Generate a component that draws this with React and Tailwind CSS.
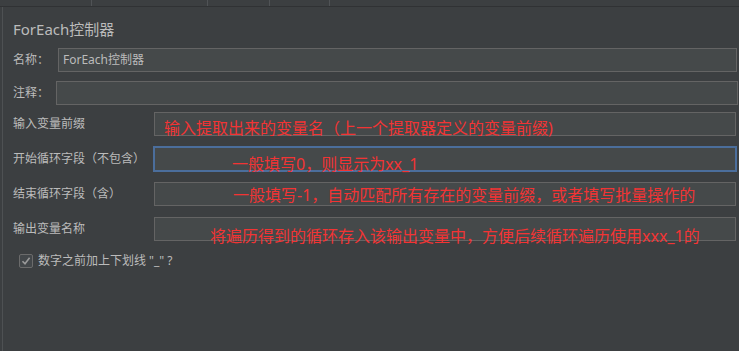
import React from "react";

const font = { fontFamily: '"Noto Sans", "Noto Sans CJK SC", sans-serif' };

function Row({ label, labelW, mt, h, focused, children, right }) {
  return (
    <div className={`flex items-center ${mt}`}>
      <div className={`${labelW} shrink-0 text-[12px] leading-none text-[#bbbbbb] whitespace-nowrap`}>{label}</div>
      <div
        className={`${h} ${right} flex-1 relative bg-[#45494a] ${
          focused ? "border-2 border-[#4b6e9c]" : "border border-[#646464]"
        }`}
      >
        {children}
      </div>
    </div>
  );
}

function Note({ className, children }) {
  return (
    <div className={`text-[16px] leading-[16px] text-[#f23434] whitespace-nowrap ${className}`}>{children}</div>
  );
}

export default function App() {
  return (
    <div className="w-[739px] h-[351px] bg-[#3c3f41] overflow-hidden flex flex-col" style={font}>
      <div className="h-[7px] shrink-0 flex border-b border-[#303234]">
        <div className="w-[92px] border-r border-[#505356]" />
        <div className="w-[116px] border-r border-[#505356]" />
        <div className="w-[62px] border-r border-[#505356]" />
        <div className="w-[60px] border-r border-[#505356]" />
        <div className="flex-1" />
      </div>
      <div className="flex-1 ml-[2px] border-l border-[#4e5153] pl-[10px] flex flex-col">
        <div className="mt-[13px] text-[15px] leading-[18px] text-[#bbbbbb]">ForEach控制器</div>
        <Row label="名称：" labelW="w-[45px]" mt="mt-[10px]" h="h-[24px]" right="mr-[2px]">
          <div className="pl-[4px] pt-[3px] text-[12px] leading-[16px] text-[#bbbbbb]">ForEach控制器</div>
        </Row>
        <Row label="注释：" labelW="w-[43px]" mt="mt-[9px]" h="h-[24px]" right="mr-[1px]" />
        <Row label="输入变量前缀" labelW="w-[141px]" mt="mt-[7px]" h="h-[24px]" right="mr-[3px]">
          <Note className="pl-[9px] pt-[7px]">输入提取出来的变量名（上一个提取器定义的变量前缀)</Note>
        </Row>
        <Row label="开始循环字段（不包含）" labelW="w-[140px]" mt="mt-[10px]" h="h-[26px]" focused right="mr-[2px]">
          <Note className="pl-[77px] pt-[8px]">一般填写0，则显示为xx_1</Note>
        </Row>
        <Row label="结束循环字段（含）" labelW="w-[141px]" mt="mt-[10px]" h="h-[24px]" right="mr-[3px]">
          <Note className="pl-[78px] pt-[4px]">一般填写-1，自动匹配所有存在的变量前缀，或者填写批量操作的</Note>
        </Row>
        <Row label="输出变量名称" labelW="w-[141px]" mt="mt-[11px]" h="h-[24px]" right="mr-[3px]">
          <Note className="pl-[55px] pt-[10px]">将遍历得到的循环存入该输出变量中，方便后续循环遍历使用xxx_1的</Note>
        </Row>
        <div className="flex items-center mt-[13px] ml-[6px]">
          <div className="w-[14px] h-[14px] border border-[#6b6b6b] bg-[#43474a] rounded-[2px] flex items-center justify-center">
            <svg width="10" height="10" viewBox="0 0 10 10">
              <path d="M1.5 5.2 L4 7.8 L8.6 1.8" fill="none" stroke="#9a9a9a" strokeWidth="1.6" />
            </svg>
          </div>
          <div className="ml-[5px] text-[12px] leading-none text-[#bbbbbb] whitespace-nowrap">数字之前加上下划线 "_" ?</div>
        </div>
      </div>
    </div>
  );
}
